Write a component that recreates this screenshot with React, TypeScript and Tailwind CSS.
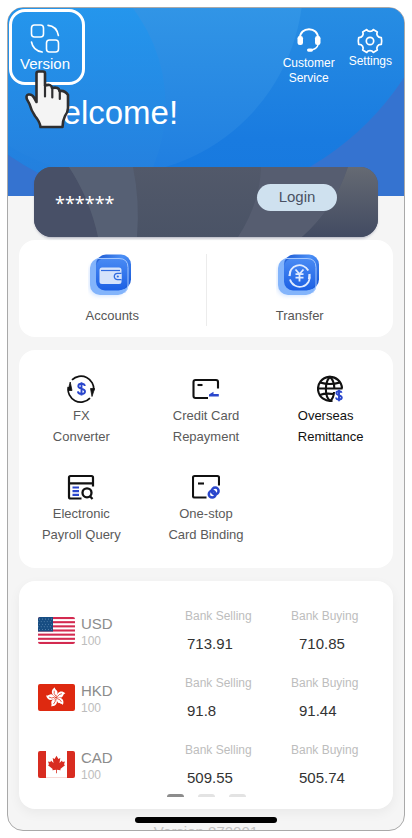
import type { ReactNode } from 'react';

interface Rate {
  code: string;
  selling: string;
  buying: string;
  flag: ReactNode;
}

interface Service {
  lines: [string, string];
  icon: ReactNode;
  active?: boolean;
}

function HeaderBackground() {
  return (
    <svg className="absolute inset-0 h-full w-full" viewBox="8 8 397 188" preserveAspectRatio="none" aria-hidden="true">
      <defs>
        <linearGradient id="sky" gradientUnits="userSpaceOnUse" x1="0" y1="8" x2="0" y2="196">
          <stop offset="0" stopColor="#278de3" />
          <stop offset="0.7" stopColor="#197be0" />
          <stop offset="1" stopColor="#1779df" />
        </linearGradient>
        <linearGradient id="skyInner" gradientUnits="userSpaceOnUse" x1="0" y1="8" x2="0" y2="180">
          <stop offset="0" stopColor="#3195e6" />
          <stop offset="1" stopColor="#1f7de0" />
        </linearGradient>
        <linearGradient id="skyLeft" gradientUnits="userSpaceOnUse" x1="0" y1="8" x2="0" y2="180">
          <stop offset="0" stopColor="#2196ee" />
          <stop offset="1" stopColor="#2680dd" />
        </linearGradient>
        <clipPath id="skyClip">
          <circle cx="169" cy="-77" r="282" />
        </clipPath>
      </defs>
      <rect x="8" y="8" width="397" height="188" fill="#3573d0" />
      <circle cx="169" cy="-77" r="282" fill="url(#sky)" />
      <circle cx="111" cy="-18" r="193" fill="url(#skyInner)" />
      <circle cx="7" cy="105" r="159" fill="url(#skyLeft)" fillOpacity="0.8" clipPath="url(#skyClip)" />
    </svg>
  );
}

function CardBackground() {
  return (
    <svg className="absolute inset-0 h-full w-full" viewBox="0 0 344 70" preserveAspectRatio="none" aria-hidden="true">
      <defs>
        <linearGradient id="cardBase" x1="0" y1="0" x2="0" y2="1">
          <stop offset="0" stopColor="#52596a" />
          <stop offset="1" stopColor="#4a5366" />
        </linearGradient>
        <linearGradient id="cardEnd" x1="0" y1="0" x2="0" y2="1">
          <stop offset="0" stopColor="#656a73" />
          <stop offset="1" stopColor="#424b62" />
        </linearGradient>
      </defs>
      <rect width="344" height="70" fill="url(#cardBase)" />
      <path d="M0 0H35Q56 32 64 70H0Z" fill="#485067" />
      <path d="M35 0H99Q106 34 103 70H64Q56 32 35 0Z" fill="#566074" />
      <path d="M227 0H314Q300 42 268 70H204Q226 36 227 0Z" fill="#565d70" />
      <path d="M314 0H344V70H268Q300 42 314 0Z" fill="url(#cardEnd)" />
    </svg>
  );
}

function VersionIcon() {
  return (
    <svg width="30" height="30" viewBox="0 0 30 30" fill="none" stroke="#fff" strokeWidth="1.6" strokeLinecap="round" aria-hidden="true">
      <rect x="1.5" y="1" width="12" height="12" rx="3" />
      <rect x="16.5" y="16" width="12" height="12" rx="3" />
      <path d="M18 1.4Q26.5 2 28.4 11.5" />
      <path d="M1.5 18Q3 26.5 12.2 28" />
    </svg>
  );
}

function HeadsetIcon() {
  return (
    <svg width="24" height="24" viewBox="0 0 24 24" fill="none" aria-hidden="true">
      <path d="M3 10C3 4.5 7 1.3 12 1.3S21 4.5 21 10" stroke="#fff" strokeWidth="2" />
      <rect x="0.5" y="8" width="5.5" height="9" rx="2.3" fill="#fff" />
      <rect x="18" y="8" width="5.5" height="9" rx="2.3" fill="#fff" />
      <path d="M21.5 15.5C20.5 19.5 18 21.5 14 22" stroke="#fff" strokeWidth="1.4" />
      <rect x="10" y="20.5" width="6" height="3.2" rx="1.6" fill="#fff" />
    </svg>
  );
}

function GearIcon() {
  return (
    <svg width="26" height="26" viewBox="0 0 26 26" fill="none" stroke="#fff" strokeWidth="1.7" strokeLinejoin="round" aria-hidden="true">
      <path d="M9.8 1.6C11 4 15 4 16.2 1.6L20.3 4C19 6.6 20.6 9.7 24.3 9.6Q25.1 13 24.3 16.4C20.6 16.3 19 19.4 20.3 22L16.2 24.4C15 22 11 22 9.8 24.4L5.7 22C7 19.4 5.4 16.3 1.7 16.4Q.9 13 1.7 9.6C5.4 9.7 7 6.6 5.7 4Z" />
      <circle cx="13" cy="13" r="3.7" />
    </svg>
  );
}

function HandPointer() {
  return (
    <svg width="45" height="59" viewBox="0 0 45 59" aria-hidden="true">
      <path
        d="M11.5 3.5Q11.5 1.5 13.5 1.5H18Q20 1.5 20 3.5V15.5Q26.5 13.5 27 18Q34 16.5 34.5 21Q40 20 43 25V38Q43 42 40 46Q37.5 51 37.5 57H15.5Q15 52 10 46Q6 40 4.5 34L1.8 29Q.8 25 3.5 24.5Q7 24 9 27.5L11.5 32Z"
        fill="#f4f4f4"
        stroke="#2e2e30"
        strokeWidth="2.6"
        strokeLinejoin="round"
      />
      <path d="M20 15V26.5M27.3 18V27.5M34.8 21V29" stroke="#2e2e30" strokeWidth="2.2" strokeLinecap="round" />
    </svg>
  );
}

function Tile({ id, children }: { id: string; children: ReactNode }) {
  return (
    <svg width="48" height="46" viewBox="2 0 48 46" fill="none" aria-hidden="true">
      <defs>
        <linearGradient id={`${id}Back`} x1="0" y1="0" x2="1" y2="1">
          <stop offset="0" stopColor="#1a56cf" />
          <stop offset="0.4" stopColor="#4b8ff6" />
          <stop offset="1" stopColor="#1252d3" />
        </linearGradient>
        <linearGradient id={`${id}Front`} x1="0" y1="0" x2="0" y2="1">
          <stop offset="0" stopColor="#4a8bf4" />
          <stop offset="1" stopColor="#1c60e4" />
        </linearGradient>
        <filter id={`${id}Glow`} x="-30%" y="-30%" width="160%" height="160%">
          <feGaussianBlur stdDeviation="2" />
        </filter>
      </defs>
      <rect x="3" y="9" width="36" height="33" rx="9" fill="#9fc4ff" opacity="0.45" filter={`url(#${id}Glow)`} />
      <rect x="4" y="4" width="38" height="37" rx="10" fill="#83b4fb" />
      <rect x="10" y="0.5" width="35" height="35" rx="10" fill={`url(#${id}Back)`} />
      <rect x="10" y="4" width="31.5" height="32.5" rx="9" fill={`url(#${id}Front)`} />
      <path d="M11 4.5H33Q42 4.5 42 13.5V31Q42 36 38.5 39" stroke="#a5c8ff" strokeWidth="1" />
      {children}
    </svg>
  );
}

function AccountsIcon() {
  return (
    <Tile id="accounts">
      <rect x="13.5" y="13.5" width="22" height="16.5" rx="2.5" fill="#d5e3fb" />
      <path d="M15 16.5H34" stroke="#2f6be0" strokeWidth="1.2" />
      <path d="M35.5 19.3H31.5A3 3 0 0 0 31.5 25.7H35.5" fill="#d5e3fb" stroke="#2f6be0" strokeWidth="1.3" />
      <circle cx="31.8" cy="22.5" r="1.1" fill="#2f6be0" />
    </Tile>
  );
}

function TransferIcon() {
  return (
    <Tile id="transfer">
      <g stroke="#e0ebff" strokeWidth="1.8">
        <path d="M15.5 22A10 10 0 0 1 34.3 16.5M35.5 20A10 10 0 0 1 16 25.5" />
        <path d="M15.5 22L16.5 17M35.5 20L34.8 25" />
        <path d="M21.5 15.5L25.5 20L29.5 15.5M21.5 20.2H29.5M21.5 23.7H29.5M25.5 20V27.5" />
      </g>
    </Tile>
  );
}

function FxIcon() {
  return (
    <svg width="28" height="28" viewBox="0 0 28 28" fill="none" aria-hidden="true">
      <path d="M5 4.9A12.7 12.7 0 0 1 26.6 15.5M23 23.1A12.7 12.7 0 0 1 1.3 12" stroke="#111" strokeWidth="1.7" />
      <path d="M1 15.5L3.2 7L5 15.5ZM23.5 13.5H27.6L25 21.5Z" fill="#111" stroke="#111" strokeWidth="0.8" />
      <path d="M17.8 11C17.6 9.4 16.3 8.8 14.5 8.8C12.5 8.8 11.3 9.7 11.3 11.2C11.3 14.6 18 12.8 18 16.5C18 18.2 16.6 19 14.5 19C12.3 19 11 18 10.9 16.4M14.5 7.3V20.6" stroke="#2a46cc" strokeWidth="1.9" />
    </svg>
  );
}

function CreditCardIcon() {
  return (
    <svg width="28" height="28" viewBox="0 0 28 28" fill="none" aria-hidden="true">
      <path d="M16 23H3.5Q1.5 23 1.5 21V7Q1.5 5 3.5 5H24Q26 5 26 7V13.5" stroke="#111" strokeWidth="2.1" />
      <path d="M5.5 10H10.5" stroke="#111" strokeWidth="2.1" />
      <path d="M17 21.5V19.5L21.5 16.7V19H26.8V21.5Z" fill="#2a46cc" />
    </svg>
  );
}

function GlobeIcon() {
  return (
    <svg width="28" height="28" viewBox="1 0 28 28" fill="none" aria-hidden="true">
      <g stroke="#111" strokeWidth="2.1">
        <path d="M16.5 25.6A12 12 0 1 1 26 13.5" />
        <path d="M14 26C8.5 21 8.5 7 14 2C17 4.6 18.3 8.8 18.3 13.5M18 17C17.8 21 16 24.5 14 26" />
        <path d="M4 7.5Q14 10.5 24 7.5M2 13.5H26.5M3.7 20Q9.5 18 17 19" />
      </g>
      <path d="M25.6 17.8C25.3 16.5 24.3 16.2 23 16.2C21.4 16.2 20.4 16.9 20.4 18.1C20.4 21 25.8 19.6 25.8 22.6C25.8 24 24.6 24.6 23 24.6C21.2 24.6 20.2 23.8 20.1 22.5M23 14.8V26.2" stroke="#2a46cc" strokeWidth="1.9" />
    </svg>
  );
}

function PayrollIcon() {
  return (
    <svg width="28" height="28" viewBox="0 0 28 28" fill="none" aria-hidden="true">
      <path d="M14.5 25.5H3.5Q2 25.5 2 24V4.5Q2 3 3.5 3H24.5Q26 3 26 4.5V13.5M2 10.3H26" stroke="#111" strokeWidth="2.2" />
      <path d="M5.5 14.5H12M5.5 18.2H12M5.5 21.9H12" stroke="#2a46cc" strokeWidth="2.2" />
      <circle cx="20" cy="19.8" r="4.5" stroke="#111" strokeWidth="2.3" />
      <path d="M22.8 23L25.5 26" stroke="#111" strokeWidth="2.2" />
    </svg>
  );
}

function BindingIcon() {
  return (
    <svg width="28" height="28" viewBox="0 0 28 28" fill="none" aria-hidden="true">
      <path d="M14.5 24.5H2.5Q1 24.5 1 23V4.5Q1 3 2.5 3H25.5Q27 3 27 4.5V12.5" stroke="#111" strokeWidth="2.1" />
      <path d="M6 10.5H12" stroke="#111" strokeWidth="2.1" />
      <g stroke="#2a46cc" strokeWidth="2.5">
        <circle cx="23.2" cy="18" r="3.4" />
        <circle cx="20.2" cy="21.2" r="3.4" />
      </g>
    </svg>
  );
}

const star = 'M0 -1L.29 -.4L.95 -.31L.47 .15L.59 .81L0 .5L-.59 .81L-.47 .15L-.95 -.31L-.29 -.4Z';

function UsFlag() {
  const stripes = [0, 1, 2, 3, 4, 5, 6];
  return (
    <svg className="mt-0.5 rounded-xs" width="37" height="27" viewBox="0 0 37 26" preserveAspectRatio="none" role="img" aria-label="USD">
      <rect width="37" height="26" fill="#fff" />
      {stripes.map(i => <rect key={i} y={i * 4} width="37" height="2" fill="#d32a50" />)}
      <rect width="15" height="14" fill="#174d82" />
      {[2, 4.5, 7, 9.5, 12].map((y, row) =>
        [1.5, 4.5, 7.5, 10.5, 13.5].map(x => (
          <path key={`${x}-${y}`} d={star} transform={`translate(${row % 2 ? x - 1.3 : x} ${y}) scale(.6)`} fill="#7fa6c9" />
        ))
      )}
    </svg>
  );
}

function HkFlag() {
  return (
    <svg className="mt-0.5 rounded-xs" width="37" height="27" viewBox="0 0 37 27" role="img" aria-label="HKD">
      <rect width="37" height="27" fill="#de2910" />
      {[-10, 62, 134, 206, 278].map(a => (
        <g key={a} transform={`translate(18 13.5) rotate(${a})`}>
          <path d="M0 -.6C-4 -2.8 -4.8 -8.2 .8 -10.2C-.4 -8 3.4 -6.8 2.2 -4C1.6 -2.5 .4 -1.8 0 -.6Z" fill="#fff" />
          <path d="M0 -1.5Q-1.8 -4 -.6 -7" fill="none" stroke="#de2910" strokeWidth="0.7" />
        </g>
      ))}
    </svg>
  );
}

function CaFlag() {
  return (
    <svg className="mt-0.5 rounded-xs" width="37" height="27" viewBox="0 0 37 27" role="img" aria-label="CAD">
      <rect width="37" height="27" fill="#fff" />
      <rect x="0" y="26.5" width="37" height="0.5" fill="#f0b5ad" />
      <rect width="8" height="27" fill="#d82c20" />
      <rect x="29" width="8" height="27" fill="#d82c20" />
      <path
        d="M18.5 4.8L20.4 8L22.3 7L21.5 12L24 9.5L24.6 11L27 10.6L26 13.3L27 14.2L22.3 18L22.7 19.3L18.9 18.7V22.3H18.1V18.7L14.3 19.3L14.7 18L10 14.2L11 13.3L10 10.6L12.4 11L13 9.5L15.5 12L14.7 7L16.6 8Z"
        fill="#d82c20"
      />
    </svg>
  );
}

const services: Service[] = [
  { lines: ['FX', 'Converter'], icon: <FxIcon /> },
  { lines: ['Credit Card', 'Repayment'], icon: <CreditCardIcon /> },
  { lines: ['Overseas', 'Remittance'], icon: <GlobeIcon />, active: true },
  { lines: ['Electronic', 'Payroll Query'], icon: <PayrollIcon /> },
  { lines: ['One-stop', 'Card Binding'], icon: <BindingIcon /> },
];

const rates: Rate[] = [
  { code: 'USD', selling: '713.91', buying: '710.85', flag: <UsFlag /> },
  { code: 'HKD', selling: '91.8', buying: '91.44', flag: <HkFlag /> },
  { code: 'CAD', selling: '509.55', buying: '505.74', flag: <CaFlag /> },
];

function Header() {
  return (
    <header className="relative h-[188px] text-white">
      <HeaderBackground />
      <div className="relative flex items-start justify-between">
        <button type="button" className="mt-px ml-px flex h-[76px] w-[76px] flex-col items-center gap-[2px] rounded-[16px] border-3 border-white pt-3 pr-1">
          <VersionIcon />
          <span className="text-[15px] leading-4">Version</span>
        </button>
        <div className="flex items-start gap-[14px] pt-5 pr-3">
          <button type="button" className="flex flex-col items-center gap-1 text-[12px] leading-[15px]">
            <HeadsetIcon />
            <span>Customer<br />Service</span>
          </button>
          <button type="button" className="flex flex-col items-center text-[12px] leading-[15px]">
            <GearIcon />
            <span>Settings</span>
          </button>
        </div>
      </div>
      <h1 className="relative mt-[7px] pl-6 text-[33px] leading-10">Welcome!</h1>
      {/* tap hint over the version button */}
      <div className="pointer-events-none absolute top-[62px] left-[17px]">
        <HandPointer />
      </div>
    </header>
  );
}

function LoginCard() {
  return (
    <section className="relative mx-[26px] -mt-[29px] flex h-[70px] items-start justify-between overflow-hidden rounded-[18px] shadow-[0_2px_3px_-1px_rgba(60,66,100,0.4)]">
      <CardBackground />
      <span className="relative pt-6 pl-[21px] font-['Noto_Sans',sans-serif] text-[18px] leading-6 text-white">******</span>
      <button type="button" className="relative mt-[17px] mr-[41px] h-[27px] w-20 rounded-full bg-[#cfe1ef] text-[15px] text-[#4a5163]">Login</button>
    </section>
  );
}

function QuickActions() {
  return (
    <section className="mx-[11px] mt-[3px] flex h-[97px] items-start rounded-[16px] bg-white pt-[14px] text-[13px] leading-4 text-[#565656]">
      <button type="button" className="flex flex-1 flex-col items-center gap-2">
        <AccountsIcon />
        <span>Accounts</span>
      </button>
      <div className="h-[72px] w-px bg-[#ececec]" />
      <button type="button" className="flex flex-1 flex-col items-center gap-2">
        <TransferIcon />
        <span>Transfer</span>
      </button>
    </section>
  );
}

function Services() {
  return (
    <section className="mx-[11px] mt-[13px] grid grid-cols-3 gap-y-[26px] rounded-[16px] bg-white pt-[25px] pb-[23px] text-[13px] leading-[21px] text-[#5a5a5a]">
      {services.map(({ lines, icon, active }) => (
        <button type="button" key={lines[1]} className="flex flex-col items-center gap-[2px]">
          {icon}
          <span className={active ? 'text-left text-[#111]' : ''}>{lines[0]}<br />{lines[1]}</span>
        </button>
      ))}
    </section>
  );
}

function Rates() {
  return (
    <section className="mx-[11px] mt-[13px] rounded-[16px] bg-white pt-[26px] pb-3 pl-[19px] shadow-[0_4px_12px_rgba(0,0,0,0.05)]">
      <table className="w-full table-fixed">
        <tbody>
          {rates.map(({ code, selling, buying, flag }) => (
            <tr key={code} className="h-[67px] align-top">
              <th scope="row" className="w-[147px] pt-2 text-left font-normal">
                <div className="flex items-start gap-[6px]">
                  {flag}
                  <div>
                    <p className="text-[15px] leading-[18px] text-[#8c8c8c]">{code}</p>
                    <p className="text-[12px] leading-4 text-[#bdbdbd]">100</p>
                  </div>
                </div>
              </th>
              <td className="w-[106px]">
                <p className="text-[12px] leading-[18px] text-[#bdbdbd]">Bank Selling</p>
                <p className="mt-[9px] pl-[2px] text-[15px] leading-5 text-[#333]">{selling}</p>
              </td>
              <td>
                <p className="text-[12px] leading-[18px] text-[#bdbdbd]">Bank Buying</p>
                <p className="mt-[9px] pl-2 text-[15px] leading-5 text-[#333]">{buying}</p>
              </td>
            </tr>
          ))}
        </tbody>
      </table>
      <div className="-mt-[14px] flex justify-center gap-[14px] pr-[19px]">
        <span className="h-[3px] w-[17px] rounded-t-sm bg-[#8c8c8c]" />
        <span className="h-[3px] w-[17px] rounded-t-sm bg-[#e3e3e3]" />
        <span className="h-[3px] w-[17px] rounded-t-sm bg-[#e3e3e3]" />
      </div>
    </section>
  );
}

export default function App() {
  return (
    <div className="min-h-screen bg-white p-[7px] font-['Liberation_Sans',Arial,sans-serif]">
      <main className="overflow-hidden rounded-[16px] border border-[#a9a9a9] bg-[#f5f5f5]">
        <Header />
        <LoginCard />
        <QuickActions />
        <Services />
        <Rates />
        <footer className="flex h-[21px] flex-col items-center overflow-hidden pt-2">
          <div className="h-[6px] w-[142px] shrink-0 rounded-full bg-black" />
          <p className="text-[15px] leading-[18px] text-[#c4c4c4]">Version 872001</p>
        </footer>
      </main>
    </div>
  );
}
